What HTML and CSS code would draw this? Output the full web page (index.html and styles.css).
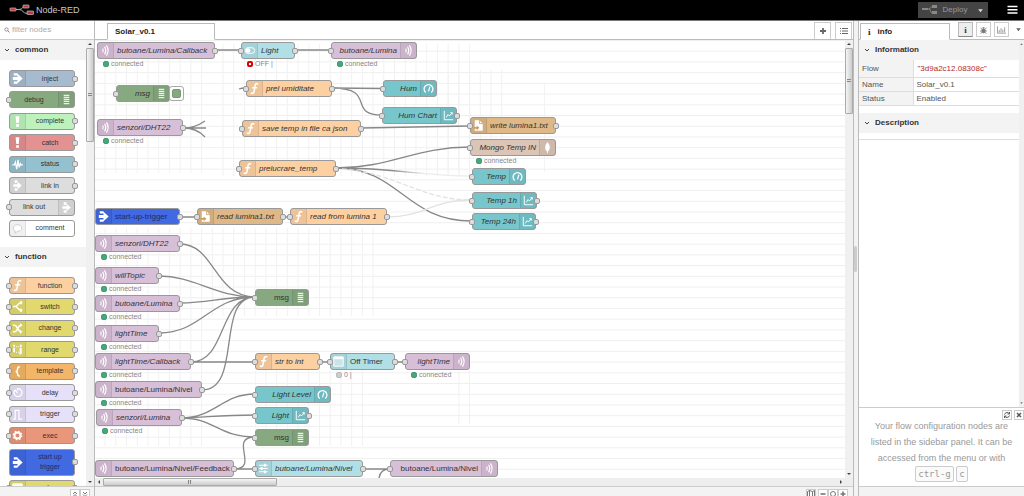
FILE: index.html
```html
<!DOCTYPE html>
<html lang="en">
<head>
<meta charset="utf-8">
<title>Node-RED : Solar_v0.1</title>
<link rel="stylesheet" href="styles.css">
</head>
<body>
<svg class="sprite" aria-hidden="true">
  <symbol id="arrow" viewBox="0 0 16 16"><path d="M4 2.500h4v2.300H4zM3 6.300h5V3l5.500 5L8 13V9.700H3zM4 11.200h4v2.300H4z" fill="#fff"/></symbol>
  <symbol id="debug" viewBox="0 0 16 16"><path d="M5 3.500h6M5 5.700h6M5 7.900h6M5 10.100h6M5 12.300h6" stroke="#fff" stroke-width="1.300" opacity=".85"/></symbol>
  <symbol id="bang" viewBox="0 0 16 16"><path d="M6 2.500h4l-.7 7.200H6.700zM6.500 11h3v2.500h-3z" fill="#fff"/></symbol>
  <symbol id="status" viewBox="0 0 16 16"><path d="M2.500 8.500h2.200l1-3 1.500 7.500L8.500 3l1.300 8 1.200-4 .8 1.500h2" stroke="#fff" stroke-width="1.300" fill="none"/></symbol>
  <symbol id="link" viewBox="0 0 16 16"><path d="M5 2.500h3v2L5 5.500zM3.500 6.700h4.500V4l4.500 4L8 12V9.300H3.500zM5 10.500l3 1v2H5z" fill="#fff"/></symbol>
  <symbol id="comment" viewBox="0 0 16 16"><path d="M8 4c3 0 4.500 1.500 4.500 3.600S11 11 8 11l-2.800 2 .3-2.400C4 10 3.500 9 3.500 7.600 3.500 5.500 5 4 8 4z" stroke="#ccc" fill="#fff"/></symbol>
  <symbol id="fn" viewBox="0 0 16 16"><path d="M12 3.200C9.800 2 8.800 3.500 8.500 5.500l-.9 5.300C7.200 13 6 13.800 4 12.800M5.500 7.200h5.300" stroke="#fff" stroke-width="1.700" fill="none"/></symbol>
  <symbol id="switch" viewBox="0 0 16 16"><path d="M3 8h3c2 0 2-4 6-4M6 8c2 0 2 4 6 4" stroke="#fff" stroke-width="1.500" fill="none"/><path d="M10.500 2.500h2.500v3h-2.500zM10.500 10.500h2.500v3h-2.500z" fill="#fff"/></symbol>
  <symbol id="change" viewBox="0 0 16 16"><path d="M3 4.500h2c3 0 3 7 7 7M3 11.500h2c3 0 3-7 7-7" stroke="#fff" stroke-width="1.500" fill="none"/><path d="M10.500 2.500l3 2-3 2zM10.500 9.500l3 2-3 2z" fill="#fff"/></symbol>
  <symbol id="range" viewBox="0 0 16 16"><path d="M3.500 6h1.800v5H3.500zM3.500 3h1.800v2H3.500zM10.500 6h2v5.500c0 1.500-1 2-2.500 2M10.500 3h2v2h-2z" fill="#fff"/><path d="M6.500 5h3M6.500 11h3" stroke="#fff" stroke-dasharray="1 1"/></symbol>
  <symbol id="brace" viewBox="0 0 16 16"><path d="M10.500 3C8 3 8 4 8 5.500S8 8 6 8c2 0 2 1 2 2.500S8 13 10.500 13" stroke="#fff" stroke-width="1.500" fill="none"/></symbol>
  <symbol id="delay" viewBox="0 0 16 16"><path d="M5 5.500a4.300 4.300 0 1 0 3-1.700v2M8 8.500L5 5" stroke="#fff" stroke-width="1.300" fill="none"/></symbol>
  <symbol id="pulse" viewBox="0 0 16 16"><path d="M3 13h2.500V3.500h4V13H13" stroke="#fff" stroke-width="1.300" fill="none"/></symbol>
  <symbol id="cog" viewBox="0 0 16 16"><circle cx="8" cy="8" r="3.200" stroke="#fff" stroke-width="2" fill="none"/><circle cx="8" cy="8" r="4.600" stroke="#fff" stroke-width="1.200" stroke-dasharray="1.800 1.800" fill="none"/></symbol>
  <symbol id="table" viewBox="0 0 16 16"><path d="M3 3h10v10H3z" fill="#fff" fill-opacity=".4" stroke="#fff"/><path d="M3 4.500h10" stroke="#fff" stroke-width="2"/></symbol>
  <symbol id="waves" viewBox="0 0 16 16"><path d="M5 6q1.200 2 0 4M7 4q2.400 4 0 8M9 2.500q3.600 5.500 0 11" stroke="#fff" stroke-width="1.300" fill="none"/></symbol>
  <symbol id="toggle" viewBox="0 0 16 16"><rect x="3.500" y="5" width="10" height="6" rx="3" fill="none" stroke="#fff"/><circle cx="6.500" cy="8" r="2.500" fill="#fff"/></symbol>
  <symbol id="file" viewBox="0 0 16 16"><path d="M4 2.500h5L12.500 6v7.500H4z" fill="#fff"/><path d="M9 2.500V6h3.500" stroke="#c99a5e" fill="none" stroke-width=".8"/><path d="M3 9.500h3V8l3 2.500L6 13v-1.500H3z" fill="#d09c5c"/></symbol>
  <symbol id="leaf" viewBox="0 0 16 16"><path d="M8 2c3.500 4 3 8 .4 10.200V14h-.8v-1.800C5 10 4.500 6 8 2z" fill="#fff"/></symbol>
  <symbol id="gauge" viewBox="0 0 16 16"><path d="M5 12.200a4.700 4.700 0 1 1 6 0" stroke="#fff" stroke-width="1.400" fill="none"/><path d="M8 11l1.500-5" stroke="#fff" stroke-width="1.300"/></symbol>
  <symbol id="chart" viewBox="0 0 16 16"><path d="M3.500 3v9.500H13M5.500 10l2-3 1.500 1.500L12 5M10 5h2v2" stroke="#fff" fill="none"/></symbol>
  <symbol id="sliders" viewBox="0 0 16 16"><path d="M3.500 4.500h9M3.500 8h9M3.500 11.500h9" stroke="#fff" stroke-width="1.200"/><path d="M8.500 3h2v3h-2zM5 6.500h2v3H5zM8.500 10h2v3h-2z" fill="#fff"/></symbol>
  <symbol id="chevron" viewBox="0 0 8 8"><path d="M2 3l2 2 2-2" stroke="#444" fill="none"/></symbol>
</svg>

<header class="header">
  <div class="brand">
    <svg class="logo" viewBox="0 0 26 12"><path d="M6 5.500h4c4 0 3-3.500 7-3.500h2M10 5.500c4 0 4 4 8 4h2" stroke="#aaa" fill="none"/><g fill="#c03a3a" stroke="#ddd" stroke-width=".6"><rect x="1" y="4" width="6" height="3" rx=".6"/><rect x="14" y="1" width="6" height="3" rx=".6"/><rect x="18" y="7" width="6.500" height="3.500" rx=".6"/></g></svg>
    <span>Node-RED</span>
  </div>
  <div class="actions">
    <button class="deploy"><svg viewBox="0 0 16 10"><path d="M5 4h2c2 0 1-2.500 4-2.500M7 4c2 0 1 4.500 4 4.500" stroke="#888" fill="none"/><path d="M0 3h6v2H0zM10 0h5v3h-5zM10 6h5v3h-5z" fill="#888"/></svg><span>Deploy</span><svg class="caret" viewBox="0 0 6 6"><path d="M1 2h4L3 4.500z" fill="#ddd"/></svg></button>
    <button class="menu" aria-label="Menu"><svg viewBox="0 0 10 10"><path d="M0 1.500h10M0 4.800h10M0 8.100h10" stroke="#fff" stroke-width="1.500"/></svg></button>
  </div>
</header>

<main class="main">
  <aside class="palette">
    <label class="search"><svg viewBox="0 0 8 8"><circle cx="3.300" cy="3.300" r="2.200" stroke="#777" fill="none"/><path d="M5 5l2.300 2.300" stroke="#777" stroke-width="1.200"/></svg><input type="text" placeholder="filter nodes" aria-label="filter nodes"></label>
    <div class="palette-body">
      <div class="palette-list">
        <h2 class="section-title"><svg><use href="#chevron"/></svg>common</h2>
        <div class="group common">
          <div class="node inject"><svg class="icon"><use href="#arrow"/></svg><span class="label">inject</span><i class="port out"></i></div>
          <div class="node debug right"><svg class="icon"><use href="#debug"/></svg><span class="label">debug</span><i class="port in"></i></div>
          <div class="node complete"><svg class="icon"><use href="#bang"/></svg><span class="label">complete</span><i class="port out"></i></div>
          <div class="node catch"><svg class="icon"><use href="#bang"/></svg><span class="label">catch</span><i class="port out"></i></div>
          <div class="node status-node"><svg class="icon"><use href="#status"/></svg><span class="label">status</span><i class="port out"></i></div>
          <div class="node link"><svg class="icon"><use href="#link"/></svg><span class="label">link in</span><i class="port out"></i></div>
          <div class="node link right"><svg class="icon"><use href="#link"/></svg><span class="label">link out</span><i class="port in"></i></div>
          <div class="node comment"><svg class="icon"><use href="#comment"/></svg><span class="label">comment</span></div>
        </div>
        <h2 class="section-title"><svg><use href="#chevron"/></svg>function</h2>
        <div class="group functions">
          <div class="node function"><svg class="icon"><use href="#fn"/></svg><span class="label">function</span><i class="port in"></i><i class="port out"></i></div>
          <div class="node yellow"><svg class="icon"><use href="#switch"/></svg><span class="label">switch</span><i class="port in"></i><i class="port out"></i></div>
          <div class="node yellow"><svg class="icon"><use href="#change"/></svg><span class="label">change</span><i class="port in"></i><i class="port out"></i></div>
          <div class="node yellow"><svg class="icon"><use href="#range"/></svg><span class="label">range</span><i class="port in"></i><i class="port out"></i></div>
          <div class="node template"><svg class="icon"><use href="#brace"/></svg><span class="label">template</span><i class="port in"></i><i class="port out"></i></div>
          <div class="node lilac"><svg class="icon"><use href="#delay"/></svg><span class="label">delay</span><i class="port in"></i><i class="port out"></i></div>
          <div class="node lilac"><svg class="icon"><use href="#pulse"/></svg><span class="label">trigger</span><i class="port in"></i><i class="port out"></i></div>
          <div class="node exec"><svg class="icon"><use href="#cog"/></svg><span class="label">exec</span><i class="port in"></i><i class="port out"></i></div>
          <div class="node startup tall"><svg class="icon"><use href="#arrow"/></svg><span class="label">start up<br>trigger</span><i class="port out"></i></div>
          <div class="node yellow"><svg class="icon"><use href="#table"/></svg><span class="label">rbe</span><i class="port in"></i><i class="port out"></i></div>
        </div>
      </div>
      <div class="vbar"><svg viewBox="0 0 8 8"><path d="M4 3l2 2H2z"/></svg><div class="thumb palette-thumb"></div><svg class="last" viewBox="0 0 8 8"><path d="M4 5l2-2H2z"/></svg></div>
    </div>
    <footer class="footer palette-footer"><button aria-label="Collapse all"><svg viewBox="0 0 8 8"><path d="M2 4l2-2 2 2M2 6.500l2-2 2 2"/></svg></button><button aria-label="Expand all"><svg viewBox="0 0 8 8"><path d="M2 2l2 2 2-2M2 4.500l2 2 2-2"/></svg></button></footer>
  </aside>

  <section class="workspace">
    <nav class="tabs">
      <a class="tab flow-tab" href="#">Solar_v0.1</a>
      <div class="tab-tools">
        <button aria-label="Add flow"><svg viewBox="0 0 8 8"><path d="M4 1v6M1 4h6" stroke-width="1.800"/></svg></button>
        <button aria-label="List flows"><svg viewBox="0 0 8 8"><path d="M0 1.500h1M2 1.500h6M0 4h1M2 4h6M0 6.500h1M2 6.500h6"/></svg></button>
      </div>
    </nav>
    <div class="canvas-row">
      <div class="canvas">
        <svg class="drawing">
          <defs>
            <pattern id="rows" width="100" height="10.720" y="10.700" patternUnits="userSpaceOnUse"><path d="M0 .5h100" stroke="#efefef"/></pattern>
            <pattern id="cols" width="10.720" height="100" x="9.600" patternUnits="userSpaceOnUse"><path d="M.5 0v100" stroke="#f1f1f1"/></pattern>
            <linearGradient id="fade" gradientUnits="userSpaceOnUse" x1="339" y1="0" x2="470" y2="0"><stop offset="0" stop-color="#888"/><stop offset=".4" stop-color="#888"/><stop offset=".65" stop-color="#ececec"/></linearGradient>
          </defs>
          <rect width="100%" height="100%" fill="url(#rows)"/>
          <g fill="url(#cols)">
            <rect x="0" y="18" width="112" height="115"/><rect x="118" y="4" width="262" height="132"/><rect x="345" y="30" width="64" height="103"/><rect x="445" y="44" width="8" height="88"/><rect x="0" y="188" width="280" height="88"/><rect x="0" y="276" width="112" height="130"/><rect x="160" y="330" width="110" height="76"/><rect x="358" y="330" width="20" height="54"/>
          </g>
          <g class="wires" transform="translate(-95 -40)">
            <path d="M215 50h26M295 50h36M239 89q2-1 7-1M332 88L383 88.500M332 88C378 88 346 115 382 115M361 128L470 126"/>
            <path d="M336 168C390 168 415 147 470 147M336 168C400 168 405 221 472 221"/>
            <path d="M336 168C400 168 420 176 472 176" stroke="url(#fade)"/>
            <path d="M342 169C400 174 420 200 472 200" class="faint dashed"/><path d="M387 217C425 217 430 200 472 200" class="faint"/>
            <path d="M183 128h23M183 128q12 0 22-7M183 128q14 0 22 9"/>
            <path d="M180 217h17M283 217h7M180 244C215 244 214 297 255 297M159 276C195 276 215 297 255 297M180 303C210 303 220 297 255 297M159 333C202 333 210 297 255 297M191 362C227 362 218 297 255 297M202 390C243 390 215 297 255 297M191 362h64M320 362h10M395 362h10"/>
            <path d="M181 418C215 418 222 394 255 394M181 418C210 417 220 415 255 415M181 418C215 418 218 437 255 437M234 469C260 469 228 437 255 437M234 469h21M363 469h27M379 480c0-7 3-11 11-11"/>
          </g>
        </svg>
        <div class="node mqtt named" style="--x:2;--y:2;--w:118"><svg class="icon"><use href="#waves"/></svg><span class="label">butoane/Lumina/Callback</span><i class="port out"></i><span class="state">connected</span></div>
        <div class="node pale named" style="--x:146;--y:2;--w:54"><svg class="icon"><use href="#toggle"/></svg><span class="label">Light</span><i class="port in"></i><i class="port out"></i><span class="state off">OFF |</span></div>
        <div class="node mqtt right named" style="--x:236;--y:2;--w:86"><svg class="icon"><use href="#waves"/></svg><span class="label">butoane/Lumina</span><i class="port in"></i><span class="state">connected</span></div>
        <div class="node debug right named" style="--x:21;--y:45;--w:54"><svg class="icon"><use href="#debug"/></svg><span class="label">msg</span><i class="port in"></i><button class="debug-toggle" aria-label="Toggle debug output"></button></div>
        <div class="node mqtt named" style="--x:2;--y:79;--w:86"><svg class="icon"><use href="#waves"/></svg><span class="label">senzori/DHT22</span><i class="port out"></i><span class="state">connected</span></div>
        <div class="node function named" style="--x:151;--y:40;--w:86"><svg class="icon"><use href="#fn"/></svg><span class="label">prel umiditate</span><i class="port in"></i><i class="port out"></i></div>
        <div class="node teal right named" style="--x:288;--y:40;--w:54"><svg class="icon"><use href="#gauge"/></svg><span class="label">Hum</span><i class="port in"></i></div>
        <div class="node teal right named" style="--x:287;--y:67;--w:75"><svg class="icon"><use href="#chart"/></svg><span class="label">Hum Chart</span><i class="port in"></i><i class="port out"></i></div>
        <div class="node function named" style="--x:147;--y:80;--w:119"><svg class="icon"><use href="#fn"/></svg><span class="label">save temp in file ca json</span><i class="port in"></i><i class="port out"></i></div>
        <div class="node function named" style="--x:144;--y:120;--w:97"><svg class="icon"><use href="#fn"/></svg><span class="label">prelucrare_temp</span><i class="port in"></i><i class="port out"></i></div>
        <div class="node file named" style="--x:375;--y:77;--w:86"><svg class="icon"><use href="#file"/></svg><span class="label">write lumina1.txt</span><i class="port in"></i><i class="port out"></i></div>
        <div class="node mongo right named" style="--x:375;--y:99;--w:86"><svg class="icon"><use href="#leaf"/></svg><span class="label">Mongo Temp IN</span><i class="port in"></i><span class="state">connected</span></div>
        <div class="node teal right named" style="--x:377;--y:128;--w:54"><svg class="icon"><use href="#gauge"/></svg><span class="label">Temp</span><i class="port in"></i></div>
        <div class="node teal right named" style="--x:377;--y:152;--w:65"><svg class="icon"><use href="#chart"/></svg><span class="label">Temp 1h</span><i class="port in"></i><i class="port out"></i></div>
        <div class="node teal right named" style="--x:377;--y:173;--w:64"><svg class="icon"><use href="#chart"/></svg><span class="label">Temp 24h</span><i class="port in"></i><i class="port out"></i></div>
        <div class="node startup" style="--x:0;--y:168;--w:85"><svg class="icon"><use href="#arrow"/></svg><span class="label">start-up-trigger</span><i class="port out"></i></div>
        <div class="node file named" style="--x:102;--y:168;--w:86"><svg class="icon"><use href="#file"/></svg><span class="label">read lumina1.txt</span><i class="port in"></i><i class="port out"></i></div>
        <div class="node function named" style="--x:195;--y:168;--w:97"><svg class="icon"><use href="#fn"/></svg><span class="label">read from lumina 1</span><i class="port in"></i><i class="port out"></i></div>
        <div class="node mqtt named" style="--x:0;--y:195;--w:85"><svg class="icon"><use href="#waves"/></svg><span class="label">senzori/DHT22</span><i class="port out"></i><span class="state">connected</span></div>
        <div class="node mqtt named" style="--x:0;--y:227;--w:64"><svg class="icon"><use href="#waves"/></svg><span class="label">willTopic</span><i class="port out"></i><span class="state">connected</span></div>
        <div class="node mqtt named" style="--x:0;--y:255;--w:85"><svg class="icon"><use href="#waves"/></svg><span class="label">butoane/Lumina</span><i class="port out"></i><span class="state">connected</span></div>
        <div class="node mqtt named" style="--x:0;--y:285;--w:64"><svg class="icon"><use href="#waves"/></svg><span class="label">lightTime</span><i class="port out"></i><span class="state">connected</span></div>
        <div class="node mqtt named" style="--x:0;--y:313;--w:96"><svg class="icon"><use href="#waves"/></svg><span class="label">lightTime/Callback</span><i class="port out"></i><span class="state">connected</span></div>
        <div class="node mqtt" style="--x:0;--y:341;--w:107"><svg class="icon"><use href="#waves"/></svg><span class="label">butoane/Lumina/Nivel</span><i class="port out"></i><span class="state">connected</span></div>
        <div class="node mqtt named" style="--x:1;--y:369;--w:86"><svg class="icon"><use href="#waves"/></svg><span class="label">senzori/Lumina</span><i class="port out"></i><span class="state">connected</span></div>
        <div class="node mqtt" style="--x:0;--y:420;--w:139"><svg class="icon"><use href="#waves"/></svg><span class="label">butoane/Lumina/Nivel/Feedback</span><i class="port out"></i></div>
        <div class="node debug right" style="--x:160;--y:249;--w:54"><svg class="icon"><use href="#debug"/></svg><span class="label">msg</span><i class="port in"></i></div>
        <div class="node function named" style="--x:160;--y:313;--w:65"><svg class="icon"><use href="#fn"/></svg><span class="label">str to int</span><i class="port in"></i><i class="port out"></i></div>
        <div class="node pale" style="--x:235;--y:313;--w:65"><svg class="icon"><use href="#table"/></svg><span class="label">Off Timer</span><i class="port in"></i><i class="port out"></i><span class="state idle">0 |</span></div>
        <div class="node mqtt right named" style="--x:310;--y:313;--w:65"><svg class="icon"><use href="#waves"/></svg><span class="label">lightTime</span><i class="port in"></i><span class="state">connected</span></div>
        <div class="node teal right named" style="--x:160;--y:346;--w:76"><svg class="icon"><use href="#gauge"/></svg><span class="label">Light Level</span><i class="port in"></i></div>
        <div class="node teal right named" style="--x:160;--y:367;--w:54"><svg class="icon"><use href="#chart"/></svg><span class="label">Light</span><i class="port in"></i><i class="port out"></i></div>
        <div class="node debug right" style="--x:160;--y:389;--w:54"><svg class="icon"><use href="#debug"/></svg><span class="label">msg</span><i class="port in"></i></div>
        <div class="node pale named" style="--x:160;--y:420;--w:108"><svg class="icon"><use href="#sliders"/></svg><span class="label">butoane/Lumina/Nivel</span><i class="port in"></i><i class="port out"></i></div>
        <div class="node mqtt right" style="--x:295;--y:420;--w:108"><svg class="icon"><use href="#waves"/></svg><span class="label">butoane/Lumina/Nivel</span><i class="port in"></i></div>
      </div>
      <div class="vbar"><svg viewBox="0 0 8 8"><path d="M4 3l2 2H2z"/></svg><div class="thumb canvas-thumb"></div><svg class="last" viewBox="0 0 8 8"><path d="M4 5l2-2H2z"/></svg></div>
    </div>
    <div class="hbar"><svg viewBox="0 0 8 8"><path d="M3 4l2-2v4z"/></svg><div class="thumb"></div><svg class="last" viewBox="0 0 8 8"><path d="M5 4L3 2v4z"/></svg></div>
    <footer class="footer workspace-footer">
      <button aria-label="Navigator"><svg viewBox="0 0 8 8"><path d="M.5 1.500l2-1v6l-2 1zM2.500.5l3 1v6l-3-1M5.500 1.500l2-1v6l-2 1"/></svg></button>
      <button aria-label="Zoom out"><svg viewBox="0 0 8 8"><path d="M1.500 4h5" stroke-width="1.600"/></svg></button>
      <button aria-label="Reset zoom"><svg viewBox="0 0 8 8"><circle cx="4" cy="4" r="2.500"/></svg></button>
      <button aria-label="Zoom in"><svg viewBox="0 0 8 8"><path d="M4 1.500v5M1.500 4h5" stroke-width="1.600"/></svg></button>
    </footer>
  </section>

  <div class="separator"></div>

  <aside class="sidebar">
    <nav class="tabs">
      <a class="tab info-tab" href="#"><b class="info-mark">i</b>info</a>
      <div class="side-tools">
        <button class="active" aria-label="Info"><b class="info-mark">i</b></button>
        <button aria-label="Debug"><svg viewBox="0 0 8 8"><ellipse cx="4" cy="4.800" rx="1.600" ry="2.200" fill="#777"/><path d="M1 2l2 1.500M7 2L5 3.500M.5 5h7M1 7.500l2-1.500M7 7.500L5 6M3 1.500h2"/></svg></button>
        <button aria-label="Chart"><svg viewBox="0 0 10 8"><path d="M.5 0v7.500H10M2.500 4v2.500M4.500 2v4.500M6.500 3.500v3M8.500 1v5.500"/></svg></button>
        <button class="more" aria-label="More tabs"><svg viewBox="0 0 6 6"><path d="M1 2h4L3 4.500z" fill="#666" stroke="none"/></svg></button>
      </div>
    </nav>
    <div class="side-body">
      <div class="side-content">
        <h2 class="section-title"><svg><use href="#chevron"/></svg>Information</h2>
        <table class="info">
          <tr class="id-row"><th scope="row">Flow</th><td class="id">"3d9a2c12.08308c"</td></tr>
          <tr><th scope="row">Name</th><td>Solar_v0.1</td></tr>
          <tr><th scope="row">Status</th><td>Enabled</td></tr>
        </table>
        <h2 class="section-title"><svg><use href="#chevron"/></svg>Description</h2>
        <div class="description"></div>
      </div>
      <div class="vbar slim"><svg viewBox="0 0 8 8"><path d="M4 3l2 2H2z"/></svg><svg class="last" viewBox="0 0 8 8"><path d="M4 5l2-2H2z"/></svg></div>
    </div>
    <div class="tips">
      <div class="tip-tools">
        <button aria-label="Next tip"><svg viewBox="0 0 8 8"><path d="M1.500 3.500A2.700 2.700 0 0 1 6.500 3M6.500 1v2h-2M6.500 4.500A2.700 2.700 0 0 1 1.500 5M1.500 7V5h2"/></svg></button>
        <button aria-label="Close tips"><svg viewBox="0 0 8 8"><path d="M2 2l4 4M6 2L2 6" stroke-width="1.500"/></svg></button>
      </div>
      <p>Your flow configuration nodes are listed in the sidebar panel. It can be accessed from the menu or with <kbd>ctrl-g</kbd> <kbd>c</kbd></p>
    </div>
    <footer class="footer"></footer>
  </aside>
</main>
</body>
</html>
```
FILE: styles.css
```css
*, *::before { box-sizing: border-box; }
body {
  margin: 0;
  height: 100vh;
  display: flex;
  flex-direction: column;
  overflow: hidden;
  background: #fff;
  color: #333;
  font: 8px/12px "Liberation Sans", Arial, sans-serif;
}
button {
  margin: 0;
  padding: 0;
  border: 0;
  background: none;
  color: inherit;
  font: inherit;
  display: flex;
  align-items: center;
  justify-content: center;
}
a { color: inherit; text-decoration: none; }
svg { display: block; flex: none; }
.sprite { position: absolute; width: 0; height: 0; }

.header {
  flex: none;
  height: 21px;
  padding: 0 6px 0 9px;
  display: flex;
  align-items: center;
  justify-content: space-between;
  background: #000;
  border-bottom: 1px solid #777;
}
.brand { display: flex; align-items: center; gap: 1px; color: #c8c8c8; font-size: 9px; }
.logo { width: 26px; height: 12px; }
.actions { display: flex; align-items: center; gap: 19px; }
.deploy { width: 70px; height: 16px; gap: 5px; background: #444; color: #999; }
.deploy svg { width: 16px; height: 10px; }
.deploy .caret { width: 7px; height: 7px; margin-left: 5px; }
.menu svg { width: 11px; height: 10px; }

.main { flex: 1; min-height: 0; display: flex; }
.palette {
  flex: none;
  width: 95px;
  display: flex;
  flex-direction: column;
  border-right: 1px solid #bbb;
}
.search {
  flex: none;
  height: 19px;
  display: flex;
  align-items: center;
  gap: 2px;
  padding-left: 4px;
  border-bottom: 1px solid #ccc;
}
.search svg { width: 6px; height: 6px; }
.search input { width: 70px; padding: 0; border: 0; font: inherit; }
.search input::placeholder { color: #aaa; }
.palette-body { flex: 1; min-height: 0; display: flex; }
.palette-list { flex: 1; overflow: hidden; }
.section-title {
  margin: 0;
  height: 20px;
  display: flex;
  align-items: center;
  gap: 4px;
  padding-left: 3px;
  background: #f3f3f3;
  color: #333;
  font-size: 8px;
  font-weight: bold;
}
.section-title svg { width: 8px; height: 8px; }
.group {
  display: flex;
  flex-direction: column;
  justify-content: space-between;
  padding: 10px 11px 10px 9px;
}
.common { min-height: 187px; }
.functions { min-height: 240px; }

.node {
  position: relative;
  flex: none;
  height: 17px;
  display: flex;
  align-items: center;
  border: 1px solid #999;
  border-radius: 3px;
}
.node .icon { width: 16px; height: 15px; background: rgba(0, 0, 0, .06); border-right: 1px solid rgba(0, 0, 0, .08); }
.node.right { flex-direction: row-reverse; }
.node.right .icon { border-right: 0; border-left: 1px solid rgba(0, 0, 0, .08); }
.node .label { flex: 1; white-space: nowrap; }
.group .label { font-size: 7px; line-height: 10px; text-align: center; }
.group .tall { height: 27px; }
.group .tall .icon { height: 25px; }
.canvas .node { position: absolute; left: calc(var(--x) * 1px); top: calc(var(--y) * 1px); width: calc(var(--w) * 1px); }
.canvas .label { padding-left: 3px; }
.canvas .right .label { padding: 0 3px 0 0; text-align: right; }
.named .label { font-style: italic; }
.port {
  position: absolute;
  top: calc(50% - 3px);
  width: 6px;
  height: 6px;
  border: 1px solid #999;
  border-radius: 2px;
  background: #ddd;
}
.port.in { left: -4px; }
.port.out { right: -4px; }
.state {
  position: absolute;
  left: 5px;
  top: 16px;
  display: flex;
  align-items: center;
  gap: 2px;
  color: #888;
  font-size: 7px;
  line-height: 10px;
  white-space: nowrap;
}
.state::before { content: ""; width: 6px; height: 6px; border: 1px solid #4a9a78; border-radius: 2px; background: #46a67c; }
.state.off::before { border: 2px solid #d00; background: #fff; }
.state.idle::before { border-color: #bbb; background: #ccc; }
.debug-toggle {
  position: absolute;
  left: 52px;
  top: 0;
  width: 15px;
  height: 15px;
  border: 1px solid #aaa;
  border-radius: 3px;
  background: #fff;
}
.debug-toggle::before { content: ""; width: 9px; height: 9px; border: 1px solid #789a72; border-radius: 2px; background: #87a980; }

.inject { background: #a6bbcf; }
.debug { background: #87a980; }
.complete { background: #bdf2bd; }
.catch { background: #e49191; }
.status-node { background: #94c1d0; }
.link { background: #ddd; }
.comment { background: #fff; }
.function { background: #fdd0a2; }
.yellow { background: #e2d96e; }
.template { background: #f3b567; }
.lilac { background: #e6e0f8; }
.exec { background: #e9967a; }
.startup { background: #4169e1; color: #1d2c66; }
.mqtt { background: #d8bfd8; }
.pale { background: #b0e0e6; }
.teal { background: #76c6cc; }
.file { background: #deb887; }
.mongo { background: #dbc5b6; }

.vbar {
  flex: none;
  width: 8px;
  display: flex;
  flex-direction: column;
  background: #f0f0f0;
}
.vbar svg, .hbar svg { width: 8px; height: 8px; fill: #444; }
.vbar .last { margin-top: auto; }
.thumb { display: flex; align-items: center; justify-content: center; border: 1px solid #aaa; border-radius: 1px; background: linear-gradient(90deg, #f5f5f5, #ccc); }
.thumb::before { content: ""; width: 4px; height: 4px; background: repeating-linear-gradient(#888 0 1px, #ddd 1px 2px); }
.palette-thumb { height: 21%; }
.canvas-thumb { height: 15%; }
.slim { width: 5px; }
.slim svg { width: 5px; }
.hbar { flex: none; height: 8px; display: flex; background: #eee; }
.hbar .thumb { width: 23%; background: linear-gradient(#f5f5f5, #ccc); }
.hbar .thumb::before { background: repeating-linear-gradient(90deg, #888 0 1px, #ddd 1px 2px); }
.hbar .last { margin: 0 8px 0 auto; }

.footer { flex: none; height: 10px; display: flex; background: #f3f3f3; border-top: 1px solid #ccc; overflow: hidden; }
.footer button { width: 10px; height: 10px; margin-top: 2px; border: 1px solid #ccc; background: #fff; }
.footer svg { width: 8px; height: 8px; stroke: #777; fill: none; }
.palette-footer { justify-content: flex-end; padding-right: 4px; }
.workspace-footer { justify-content: flex-end; padding-right: 5px; }
.workspace-footer button:first-child { margin-right: 2px; }

.workspace { flex: 1; min-width: 0; display: flex; flex-direction: column; }
.tabs { flex: none; height: 19px; display: flex; justify-content: space-between; align-items: flex-end; border-bottom: 1px solid #bbb; }
.tab {
  height: 17px;
  margin-bottom: -1px;
  display: flex;
  align-items: center;
  border: 1px solid #bbb;
  border-bottom-color: #fff;
  background: #fff;
  color: #222;
  font-weight: bold;
}
.flow-tab { width: 108px; margin-left: 12px; padding-left: 7px; }
.tab-tools { display: flex; gap: 4px; padding-right: 1px; }
.tab-tools button { width: 17px; height: 17px; border: 1px solid #ccc; border-bottom: 0; }
.tab-tools svg { width: 8px; height: 8px; stroke: #666; }
.canvas-row { flex: 1; min-height: 0; display: flex; }
.canvas { position: relative; flex: 1; overflow: hidden; background: #fff; }
.drawing { position: absolute; inset: 0; width: 100%; height: 100%; }
.wires { fill: none; stroke: #888; stroke-width: 1.3; }
.faint { stroke: #e2e2e2; }
.dashed { stroke-dasharray: 5 2; }

.separator { flex: none; width: 6px; display: flex; align-items: center; background: #f3f3f3; border: solid #bbb; border-width: 0 1px; }
.separator::before { content: ""; width: 3px; height: 26px; border-radius: 2px; background: #ccc; }

.sidebar { flex: none; width: 165px; display: flex; flex-direction: column; }
.info-tab { width: 90px; margin-left: 1px; padding-left: 7px; gap: 7px; }
.info-mark { font-family: "Liberation Serif", serif; font-size: 9px; }
.side-tools { display: flex; gap: 3px; padding-bottom: 2px; }
.side-tools button { width: 15px; height: 15px; border: 1px solid #ccc; }
.side-tools .active { background: #eee; border-color: #bbb; border-bottom-color: #888; }
.side-tools svg { width: 9px; height: 8px; stroke: #777; fill: none; stroke-width: .8; }
.side-tools .more { width: 12px; border: 0; }
.side-tools .more svg { width: 7px; height: 7px; }
.side-body { flex: 1; min-height: 0; display: flex; }
.side-content { flex: 1; }
.side-content .section-title { padding-left: 4px; }
.info { width: 100%; margin-bottom: 7px; border-collapse: collapse; color: #555; line-height: 13px; }
.info th, .info td { padding: 0 3px; border-bottom: 1px solid #ddd; font-weight: normal; text-align: left; }
.info th { width: 54px; border-right: 1px solid #ddd; background: #f3f3f3; }
.id-row { height: 17px; }
.info .id { padding-left: 4px; color: #b72828; }
.description { height: 7px; border-bottom: 1px solid #ddd; }
.tips { position: relative; flex: none; padding: 10px 11px 4px; border-top: 1px solid #ccc; color: #999; text-align: center; }
.tips p { margin: 0; font-size: 9px; line-height: 16px; }
.tip-tools { position: absolute; right: 0; top: 2px; display: flex; gap: 2px; }
.tip-tools button { width: 10px; height: 10px; border: 1px solid #ccc; background: #fff; }
.tip-tools svg { width: 8px; height: 8px; stroke: #555; fill: none; }
kbd { padding: 2px; border: 1px solid #ccc; border-radius: 2px; background: #fafafa; font: 9px "DejaVu Sans Mono", monospace; }
```
